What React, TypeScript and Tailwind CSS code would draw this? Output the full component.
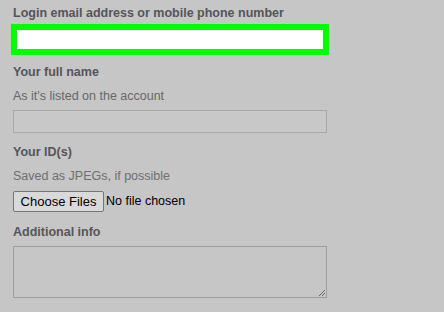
import React from "react";

export default function App() {
  return (
    <div
      className="w-[444px] h-[312px] bg-[#c6c6c6] pl-[13px] pt-[5px] flex flex-col items-start overflow-hidden"
      style={{ fontFamily: '"Liberation Sans", Arial, sans-serif' }}
    >
      <div className="h-4 leading-4 text-[12.5px] font-bold text-[#55555b] whitespace-nowrap">
        Login email address or mobile phone number
      </div>
      <div className="mt-[3px] -ml-[2px] w-[318px] h-[31px] border-[6px] border-[#00ff00] bg-white" />
      <div className="mt-[9px] h-4 leading-4 text-[12.5px] font-bold text-[#55555b]">Your full name</div>
      <div className="mt-[8px] h-4 leading-4 text-[12.5px] text-[#66666a]">As it's listed on the account</div>
      <div className="mt-[6px] w-[314px] h-[23px] border border-[#a9a9ad] bg-[#c8c8c8]" />
      <div className="mt-[11px] h-4 leading-4 text-[12.5px] font-bold text-[#55555b]">Your ID(s)</div>
      <div className="mt-[8px] h-4 leading-4 text-[12.5px] text-[#6e6e72]">Saved as JPEGs, if possible</div>
      <div className="mt-[7px] flex items-center h-[21px]">
        <div className="h-[21px] w-[91px] flex items-center justify-center border border-[#767676] rounded-[2px] bg-[#d9d9d9] text-[13px] text-black">
          Choose Files
        </div>
        <span className="ml-[2px] text-[12.5px] text-black">No file chosen</span>
      </div>
      <div className="mt-[12px] h-4 leading-4 text-[12.5px] font-bold text-[#55555b]">Additional info</div>
      <div className="mt-[6px] relative w-[314px] h-[52px] border border-[#9d9da3] bg-[#c6c6c6]">
        <svg className="absolute right-0 bottom-0" width="8" height="8" viewBox="0 0 8 8">
          <line x1="7" y1="1" x2="1" y2="7" stroke="#666" strokeWidth="1" />
          <line x1="7" y1="4" x2="4" y2="7" stroke="#666" strokeWidth="1" />
        </svg>
      </div>
    </div>
  );
}
